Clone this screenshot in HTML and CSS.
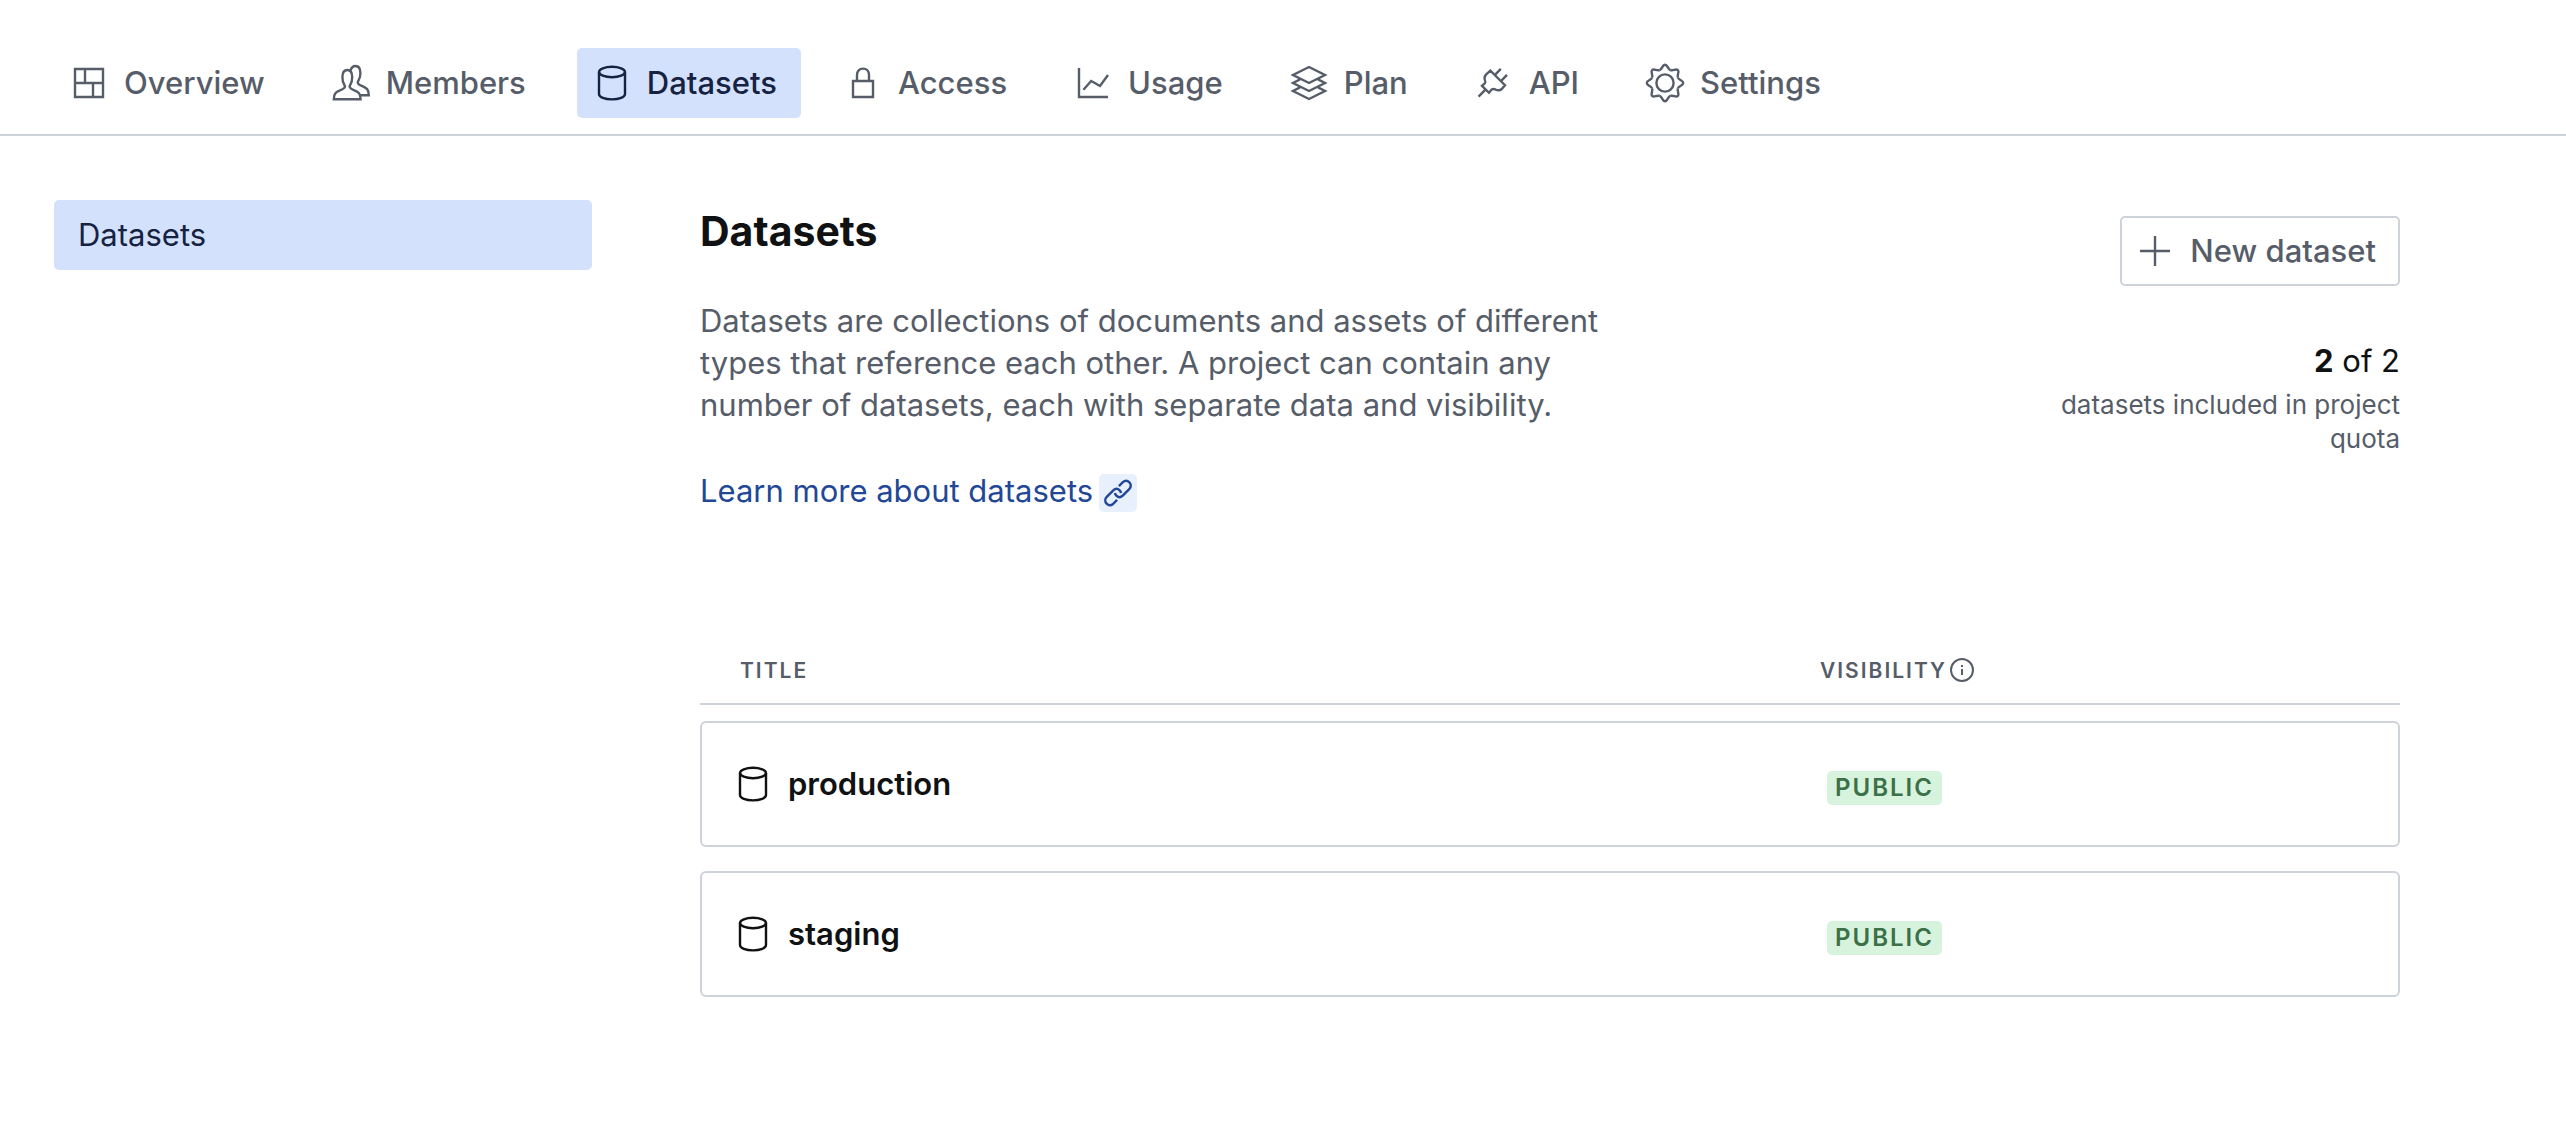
FILE: index.html
```html
<!DOCTYPE html>
<html lang="en">
<head>
<meta charset="utf-8">
<meta name="viewport" content="width=device-width, initial-scale=1">
<title>Datasets</title>
<link rel="stylesheet" href="styles.css">
</head>
<body>
<svg class="sprite" aria-hidden="true">
  <symbol id="database" viewBox="0 0 25 25"><ellipse cx="12.5" cy="7" rx="6.5" ry="2.6"/><path d="M6 7V18C6 19.5 8.9 20.7 12.5 20.7S19 19.5 19 18V7"/></symbol>
</svg>
<header class="topbar">
  <nav class="tabs" aria-label="Project">
    <a class="tab" href="#overview"><svg class="icon" viewBox="0 0 25 25"><path d="M5.5 5.5H19.5V19.5H5.5ZM5.5 12.5H19.5M10.5 5.5V12.5M14.5 12.5V19.5"/></svg>Overview</a>
    <a class="tab" href="#members"><svg class="icon" viewBox="0 0 25 25"><path d="M17.3 20.6H3.9C3.9 17.6 5 17 7 16.2C8.6 15.6 9.5 15.2 9.5 14.3C9.5 13.5 8.2 12.8 8.2 9.6C8.2 7.3 9 6 10.7 6S13.1 7.3 13.1 9.6C13.1 12.8 11.8 13.5 11.8 14.3C11.8 15.2 12.7 15.6 14.2 16.2C16.2 17 17.3 17.6 17.3 20.6Z"/><path d="M12.2 6.4C12.6 4.8 13.4 4 14.8 4C16.4 4 17.2 5.3 17.2 7.6C17.2 10.8 15.9 11.2 15.9 12.2C15.9 13.2 16.8 13.5 18.2 14.1C20.2 15 21.4 15.6 21.4 18.6H17.2"/></svg>Members</a>
    <a class="tab tab-active" href="#datasets" aria-current="page"><svg class="icon"><use href="#database"/></svg>Datasets</a>
    <a class="tab" href="#access"><svg class="icon" viewBox="0 0 25 25"><path d="M7.5 11.5H17.5V19.5H7.5ZM9.5 11.5V8.5C9.5 6.5 10.7 5.3 12.5 5.3S15.5 6.5 15.5 8.5V11.5"/></svg>Access</a>
    <a class="tab" href="#usage"><svg class="icon" viewBox="0 0 25 25"><path d="M5.5 5V19.5H20M7.7 15.9L11.6 11.5L16 14L20 8.5"/></svg>Usage</a>
    <a class="tab" href="#plan"><svg class="icon" viewBox="0 0 25 25"><path d="M12.5 4.5L20.5 8.5L12.5 12.5L4.5 8.5ZM8 10.7L4.5 12.5L12.5 16.5L20.5 12.5L17 10.7M8 14.7L4.5 16.5L12.5 20.5L20.5 16.5L17 14.7"/></svg>Plan</a>
    <a class="tab" href="#api"><svg class="icon" viewBox="0 0 25 25"><path d="M4.8 19.3L8.2 15.8M6.5 13.9L10 17.4L11.3 15.8C12 15.3 12.5 15.3 13.3 15.8C14.6 16.4 15.6 16.2 16.4 15.5L18 13.6L10.7 6.3L8.6 8.2C7.8 9 7.6 9.9 7.9 10.8C8.3 11.9 8.4 12.2 8 12.6ZM13 8.4L15.9 5.4M16.1 11.4L19 8.4"/></svg>API</a>
    <a class="tab" href="#settings"><svg class="icon" viewBox="-12.5 -12.5 25 25"><circle r="4.3"/><g id="cog"><path id="tooth" d="M-2.68 -6.47C-1.2 -7.08 -1.4 -9.1 0 -9.1C1.4 -9.1 1.2 -7.08 2.68 -6.47"/><use href="#tooth" transform="rotate(45)"/><use href="#tooth" transform="rotate(90)"/><use href="#tooth" transform="rotate(135)"/></g><use href="#cog" transform="rotate(180)"/></svg>Settings</a>
  </nav>
</header>
<div class="layout">
  <nav class="sidebar" aria-label="Datasets sections">
    <a class="side-link" href="#datasets" aria-current="page">Datasets</a>
  </nav>
  <main class="main">
    <div class="intro">
      <div class="about">
        <h1 class="heading">Datasets</h1>
        <p class="description">Datasets are collections of documents and assets of different types that reference each other. A project can contain any number of datasets, each with separate data and visibility.</p>
        <a class="learn" href="#learn">Learn more about datasets <span class="link-badge"><svg class="link-icon" viewBox="0 0 25 25"><path d="M13.1 7.9L15.7 5.4C17.1 4.1 18.8 4.3 20 5.5S21.2 8.6 19.9 9.9L15.6 14.2C14.3 15.5 12.6 15.4 11.4 14.2C10.9 13.7 10.6 13.1 10.5 12.5M11.9 17.1L9.3 19.6C7.9 20.9 6.2 20.7 5 19.5S3.8 16.4 5.1 15.1L9.4 10.8C10.7 9.5 12.4 9.6 13.6 10.8C14.1 11.3 14.4 11.9 14.5 12.5"/></svg></span></a>
      </div>
      <div class="actions">
        <button class="new-button" type="button"><svg class="icon" viewBox="0 0 25 25"><path d="M12.5 5V20M5 12.5H20"/></svg>New dataset</button>
        <p class="count"><strong>2</strong> of 2</p>
        <p class="quota">datasets included in project quota</p>
      </div>
    </div>
    <table class="datasets">
      <thead>
        <tr class="head-row"><th class="head-cell" scope="col">TITLE</th><th class="head-cell" scope="col">VISIBILITY<svg class="info-icon" viewBox="0 0 26 26"><circle cx="13" cy="12" r="11"/><path d="M13 11V17M13 7V9"/></svg></th></tr>
      </thead>
      <tbody class="rows">
        <tr class="row"><td class="name"><svg class="icon"><use href="#database"/></svg>production</td><td class="visibility"><span class="badge">PUBLIC</span></td></tr>
        <tr class="row"><td class="name"><svg class="icon"><use href="#database"/></svg>staging</td><td class="visibility"><span class="badge">PUBLIC</span></td></tr>
      </tbody>
    </table>
  </main>
</div>
</body>
</html>
```
FILE: styles.css
```css
:root {
  --text: #101112;
  --muted: #565d69;
  --border: #ced2d9;
  --selected: #d4e1fc;
  --selected-text: #152241;
  --link: #234797;
}

* { box-sizing: border-box; }

body {
  margin: 0;
  background: #fff;
  color: var(--text);
  font: 31px/42px Inter, "Liberation Sans", sans-serif;
}

h1, p { margin: 0; }
a { text-decoration: none; }

svg {
  fill: none;
  stroke: currentColor;
  stroke-width: 1.2;
}

.sprite { position: absolute; width: 0; height: 0; }

.icon { flex: none; width: 50px; height: 50px; }

.topbar {
  padding: 48px 54px 16px;
  border-bottom: 2px solid #cdd3d8;
}

.tabs { display: flex; gap: 27px; }

.tab {
  display: flex;
  align-items: center;
  gap: 10px;
  height: 70px;
  padding: 0 24px 0 10px;
  border-radius: 5px;
  color: var(--muted);
  font-weight: 500;
}

.tab-active { background: var(--selected); color: var(--selected-text); }

.layout {
  display: grid;
  grid-template-columns: 538px minmax(0, 1700px);
  gap: 108px;
  padding: 64px 54px;
}

.side-link {
  display: block;
  padding: 14px 24px;
  border-radius: 5px;
  background: var(--selected);
  color: var(--selected-text);
}

.intro {
  display: flex;
  justify-content: space-between;
  min-height: 440px;
}

.about { width: 900px; }

.heading {
  margin: 8px 0 46px;
  font-size: 41px;
  line-height: 46px;
  font-weight: 700;
}

.description { color: var(--muted); }

.learn {
  display: flex;
  align-items: flex-end;
  gap: 6px;
  margin-top: 44px;
  color: var(--link);
}

.link-badge {
  display: flex;
  border-radius: 5px;
  background: #e8effd;
}

.link-icon { width: 38px; height: 38px; stroke-width: 1.6; }

.actions {
  display: flex;
  flex-direction: column;
  align-items: flex-end;
  width: 350px;
  padding-top: 16px;
  text-align: right;
}

.new-button {
  display: flex;
  align-items: center;
  gap: 10px;
  height: 70px;
  padding: 0 22px 0 8px;
  border: 2px solid var(--border);
  border-radius: 5px;
  background: #fff;
  color: var(--muted);
  font: inherit;
  font-weight: 500;
}

.count { margin-top: 54px; }

.quota {
  margin-top: 6px;
  color: var(--muted);
  font-size: 26px;
  line-height: 34px;
}

.datasets { display: block; }

.datasets thead { display: block; }

.head-row, .row {
  display: grid;
  grid-template-columns: minmax(0, 1120px) 1fr;
}

.head-row {
  height: 65px;
  border-bottom: 2px solid var(--border);
}

.head-cell {
  display: flex;
  align-items: center;
  gap: 2px;
  height: 62px;
  padding: 0 0 0 40px;
  color: var(--muted);
  font-size: 21px;
  line-height: 28px;
  font-weight: 600;
  letter-spacing: 2px;
}

.head-cell + .head-cell { padding-left: 0; }

.info-icon { width: 26px; height: 26px; stroke-width: 2; }

.rows {
  display: grid;
  gap: 24px;
  padding-top: 16px;
}

.row {
  height: 126px;
  border: 2px solid var(--border);
  border-radius: 6px;
}

.name, .visibility { display: flex; align-items: center; padding: 0; }

.name { gap: 10px; padding-left: 26px; font-weight: 600; }

.visibility { padding: 8px 0 0 5px; }

.badge {
  padding: 0 8px;
  border-radius: 5px;
  background: #d7f3de;
  color: #3c7047;
  font-size: 24px;
  line-height: 34px;
  font-weight: 600;
  letter-spacing: 2px;
}
```
